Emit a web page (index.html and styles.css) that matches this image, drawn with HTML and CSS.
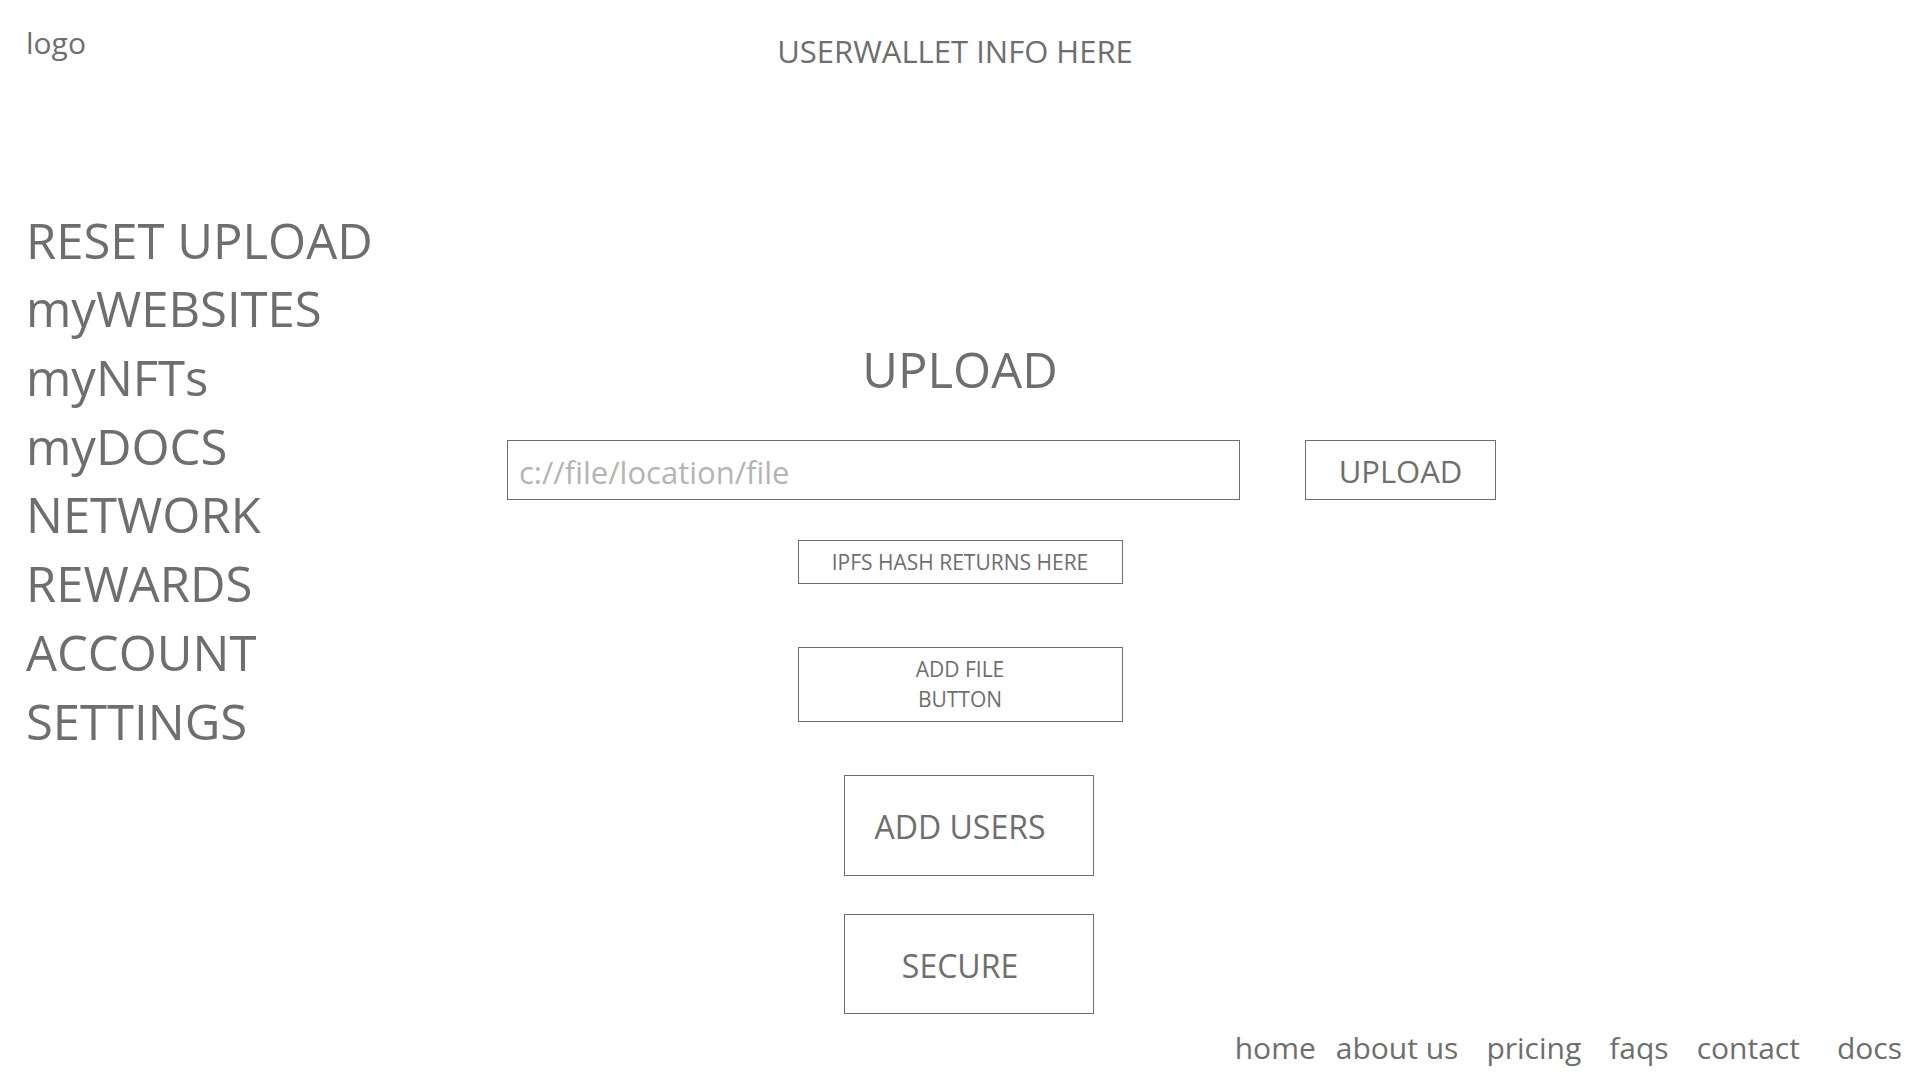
FILE: index.html
```html
<!DOCTYPE html>
<html lang="en">
<head>
<meta charset="utf-8">
<title>Upload</title>
<link rel="stylesheet" href="styles.css">
</head>
<body>
<div class="page">
  <header class="topbar">
    <div class="logo">logo</div>
    <div class="wallet">USERWALLET INFO HERE</div>
    <div></div>
  </header>
  <div class="main">
    <nav class="sidenav">
      <a class="nav-item">RESET UPLOAD</a>
      <a class="nav-item">myWEBSITES</a>
      <a class="nav-item">myNFTs</a>
      <a class="nav-item">myDOCS</a>
      <a class="nav-item">NETWORK</a>
      <a class="nav-item">REWARDS</a>
      <a class="nav-item">ACCOUNT</a>
      <a class="nav-item">SETTINGS</a>
    </nav>
    <section class="center">
      <h1 class="title">UPLOAD</h1>
      <div class="upload-row">
        <input class="file-input" type="text" placeholder="c://file/location/file">
        <button class="upload-btn">UPLOAD</button>
      </div>
      <div class="box hash-box">IPFS HASH RETURNS HERE</div>
      <button class="box addfile-box">ADD FILE<br>BUTTON</button>
      <button class="box big-box"><span>ADD USERS</span></button>
      <button class="box big-box secure-box"><span>SECURE</span></button>
    </section>
  </div>
  <footer class="footer">
    <a class="foot-link">home</a>
    <a class="foot-link gap-small">about us</a>
    <a class="foot-link">pricing</a>
    <a class="foot-link">faqs</a>
    <a class="foot-link">contact</a>
    <a class="foot-link gap-wide">docs</a>
  </footer>
</div>
</body>
</html>
```
FILE: styles.css
```css
* { box-sizing: border-box; }
html, body { margin: 0; padding: 0; background: #ffffff; }
body {
  font-family: "Open Sans", "Noto Sans", sans-serif;
  color: #6e6e6e;
  width: 1920px;
  height: 1080px;
  overflow: hidden;
}
.page { display: flex; flex-direction: column; }

.topbar {
  display: grid;
  grid-template-columns: 1fr auto 1fr;
  align-items: start;
  padding: 23px 26px 0 26px;
}
.logo { font-size: 30px; line-height: 40px; }
.wallet { font-size: 31px; line-height: 40px; margin-top: 8px; margin-right: 10px; }

.main {
  display: grid;
  grid-template-columns: 480px 960px 1fr;
  margin-top: 134.6px;
}
.sidenav {
  display: flex;
  flex-direction: column;
  padding-left: 26px;
}
.nav-item {
  font-size: 49px;
  line-height: 68.7px;
  white-space: nowrap;
}

.center {
  display: flex;
  flex-direction: column;
  align-items: center;
}
.title {
  margin: 133.4px 0 0 0;
  font-size: 49px;
  line-height: 60px;
  font-weight: 400;
}
.upload-row {
  align-self: flex-start;
  display: flex;
  gap: 65px;
  margin: 41px 0 0 27px;
}
.file-input {
  flex-shrink: 0;
  width: 733px;
  height: 60px;
  border: 1.5px solid #6e6e6e;
  border-radius: 0;
  padding: 4px 0 0 11px;
  font-family: inherit;
  font-size: 31px;
  color: #6e6e6e;
  outline: none;
  background: #fff;
}
.file-input::placeholder { color: #b4b4b4; }
.upload-btn {
  flex-shrink: 0;
  width: 191px;
  height: 60px;
  border: 1.5px solid #6e6e6e;
  background: #fff;
  font-family: inherit;
  font-size: 31px;
  color: #6e6e6e;
  padding: 3px 0 0 0;
}

.box {
  display: flex;
  align-items: center;
  justify-content: center;
  border: 1.5px solid #6e6e6e;
  background: #fff;
  font-family: inherit;
  color: #6e6e6e;
  text-align: center;
  padding: 0;
}
.hash-box {
  width: 325px;
  height: 44px;
  margin-top: 40px;
  font-size: 21px;
  line-height: 30px;
}
.addfile-box {
  width: 325px;
  height: 75px;
  margin-top: 63px;
  font-size: 21px;
  line-height: 30px;
}
.big-box {
  width: 250px;
  height: 101px;
  margin-top: 53px;
  margin-left: 18px;
  padding: 4px 18px 0 0;
  font-size: 32px;
  line-height: 40px;
}
.secure-box { height: 100px; margin-top: 38px; }

.footer {
  display: flex;
  justify-content: flex-end;
  gap: 28px;
  margin-top: 14px;
  padding-right: 18px;
}
.foot-link { font-size: 30px; line-height: 40px; }
.gap-small { margin-left: -8px; }
.gap-wide { margin-left: 9px; }
```
